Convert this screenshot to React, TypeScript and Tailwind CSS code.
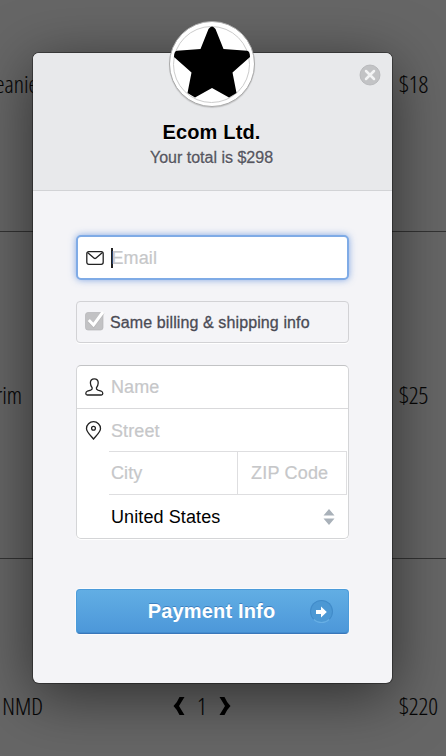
import type { ReactNode } from "react";

function CartRow({ name, price, className, children }: { name: string; price: string; className: string; children?: ReactNode }) {
  return (
    <div className={`flex justify-between border-[#333] ${className}`}>
      <div className="flex w-[43px] justify-end whitespace-nowrap">
        <span>{name}</span>
      </div>
      {children}
      <div className="w-[47px] whitespace-nowrap">
        <span>{price}</span>
      </div>
    </div>
  );
}

function Cart() {
  return (
    <div className="flex h-[756px] flex-col overflow-hidden bg-[#666] font-['Open_Sans',sans-serif] text-[24px] leading-[30px] font-light text-[#050505] [-webkit-text-stroke:0.1px_#050505] [font-stretch:75%]">
      <CartRow name="eanie" price="$18" className="h-[232px] items-center border-b pb-[64px] [&>div:first-child]:w-[38px]" />
      <CartRow name="rim" price="$25" className="h-[327px] items-center border-b pb-[1px] [&>div:first-child]:w-[22px]" />
      <CartRow name="NMD" price="$220" className="h-[197px] items-start pt-[132px]">
        <div className="mr-[38px] flex items-center gap-[12px]">
          <svg width="12" height="18" viewBox="0 0 12 18"><path d="M6.500 0h5Q9 4 6 9q3 5 5.500 9h-5Q4.500 13 .5 9 4.500 5 6.500 0Z" /></svg>
          <span>1</span>
          <svg width="12" height="18" viewBox="0 0 12 18"><path d="M5.500 0h-5Q3 4 6 9 3 14 .5 18h5Q7.500 13 11.500 9 7.500 5 5.500 0Z" /></svg>
        </div>
      </CartRow>
    </div>
  );
}

function Header() {
  return (
    <header className="flex h-[138px] flex-col items-center rounded-t-[6px] border-b border-[#d2d3d6] bg-[#e8e9eb]">
      <div className="-mt-[32px] mr-[2px] flex size-[86px] shrink-0 items-center justify-center rounded-full border border-[#aaa] bg-white shadow-[0_1px_1px_rgba(0,0,0,0.15)]">
        <div className="flex size-[77px] items-center justify-center rounded-full border border-[#ccc]">
          <svg width="76" height="73" viewBox="0 0 76 73" className="mb-[3px] shrink-0">
            <path d="M34.500 3Q38-2 41.500 3L49.500 23 73 24.700Q76 25 76 31L58.500 46.500 62.500 67 55 71.500 38 62 21 71.500 13.500 67 17.500 46.500 0 31Q0 25 3 24.700L26.500 23Z" />
          </svg>
        </div>
      </div>
      <h1 className="mt-[13px] mr-[2px] text-[20px] leading-[25px] font-bold tracking-[0.16px] text-black [text-shadow:0_1px_0_#fff]">Ecom Ltd.</h1>
      <p className="mt-[2px] mr-[2px] text-[16px] leading-[22px] text-[#55565f] [-webkit-text-stroke:0.3px_#55565f] [text-shadow:0_1px_0_#fff]">Your total is $298</p>
      <button aria-label="Close" className="absolute top-[11px] right-[11px]">
        <svg width="22" height="22" viewBox="0 0 22 22">
          <circle cx="11" cy="11" r="10" fill="#c2c3c5" stroke="#b3b4b6" strokeWidth=".8" />
          <path d="m7 7 8 8m0-8-8 8" stroke="#f2f3f4" strokeWidth="2.500" strokeLinecap="round" />
        </svg>
      </button>
    </header>
  );
}

const placeholder = "text-[18px] leading-[22px] text-[#c6c7c9] tracking-[0.1px] [-webkit-text-stroke:0.2px_#c6c7c9]";

function Checkout() {
  return (
    <section className="absolute top-[53px] left-[33px] h-[630px] w-[359px] rounded-[6px] bg-[#f4f4f7] font-['Liberation_Sans',Arial,sans-serif] shadow-[0_0_0_1px_rgba(0,0,0,0.35),0_12px_60px_rgba(0,0,0,0.55)]">
      <Header />
      <div className="flex flex-col px-[43px] pt-[44px]">
        <div className="flex h-[45px] items-center rounded-[5px] border-2 border-[#7fabe6] bg-white pl-[8px] shadow-[0_0_7px_rgba(85,135,220,0.7)]">
          <svg width="18" height="14" viewBox="0 0 18 14" fill="none" stroke="#222" strokeWidth="1.300" strokeLinejoin="round">
            <rect x=".8" y=".7" width="16.400" height="12.600" rx="2" />
            <path d="m1.500 1.500 6.700 5.700q.8.600 1.600 0l6.700-5.700" />
          </svg>
          <i className="ml-[7px] h-[20px] w-[2px] bg-[#222]" />
          <span className={`-ml-[1.500px] ${placeholder}`}>Email</span>
        </div>

        <div className="mt-[21px] flex h-[42px] items-center rounded-[4px] border border-[#d2d2d5] pl-[8px] shadow-[0_1px_0_#fff]">
          <svg width="20" height="20" viewBox="0 0 20 20" className="mb-[2px] shrink-0 overflow-visible">
            <rect x=".5" y="1.500" width="17.500" height="17.500" rx="2.500" fill="#c2c2c4" stroke="#b5b5b7" strokeWidth=".7" />
            <path d="M3.800 9.500 8.500 14.500 18 1.500" fill="none" stroke="#aaa" strokeWidth="3.800" opacity=".45" />
            <path d="M3.800 9 8.500 14 18 1" fill="none" stroke="#fff" strokeWidth="3" />
          </svg>
          <span className="mt-px ml-[5px] text-[16px] leading-[22px] tracking-[0.11px] whitespace-nowrap text-[#4a4b55] [-webkit-text-stroke:0.3px_#4a4b55]">Same billing &amp; shipping info</span>
        </div>

        <div className="mt-[22px] flex h-[174px] flex-col rounded-[5px] border border-[#d4d5d7] border-t-[#c2c3c5] bg-white shadow-[0_1px_0_#fff]">
          <div className="flex h-[43px] items-center border-b border-[#d9d9db] pl-[8px]">
            <svg width="19" height="18" viewBox="0 0 19 18" fill="none" stroke="#222" strokeWidth="1.300">
              <path d="M9.300.8C6.700.8 5.300 2.700 5.400 5c.1 2.300.8 3.700 1.800 4.900.3 1.200-.3 1.800-1.500 2.200L2.500 13C1.200 13.500.8 14.300.8 15.500c0 1 .5 1.500 1.500 1.500h14c1 0 1.500-.5 1.500-1.500 0-1.200-.4-2-1.700-2.500l-3.200-.9c-1.200-.4-1.800-1-1.500-2.200 1-1.200 1.700-2.600 1.800-4.900.1-2.300-1.300-4.200-3.900-4.200Z" />
            </svg>
            <span className={`ml-[7px] ${placeholder}`}>Name</span>
          </div>
          <div className="flex h-[43px] items-center pl-[8px]">
            <svg width="17" height="19" viewBox="0 0 17 19" fill="none" stroke="#222" strokeWidth="1.300">
              <path d="M8.500 18C6 14.800 1.500 11 1.500 7.400a7 6.700 0 0 1 14 0C15.500 11 11 14.800 8.500 18Z" />
              <circle cx="8.500" cy="7.300" r="1.900" />
            </svg>
            <span className={`ml-[9px] ${placeholder}`}>Street</span>
          </div>
          <div className="-mt-px mr-px ml-[32px] flex h-[44px] border-y border-r border-[#dedee0]">
            <div className={`flex w-[129px] items-center border-r border-[#dedee0] pl-[2px] ${placeholder}`}>City</div>
            <div className={`flex items-center pl-[13px] tracking-[0.2px]! whitespace-nowrap ${placeholder}`}>ZIP Code</div>
          </div>
          <div className="flex h-[43px] items-center justify-between pr-[13px] pl-[34px]">
            <span className="text-[18px] leading-[22px] tracking-[0.1px] text-black">United States</span>
            <svg width="12" height="16" viewBox="0 0 12 16" fill="#a9b1b9"><path d="m6 0 5.500 6.500H.5ZM6 16l5.500-6.500H.5Z" /></svg>
          </div>
        </div>

        <button className="relative mt-[50px] flex h-[45px] items-center justify-center rounded-[4px] border border-[#4b9bda] border-b-[#3976b9] bg-linear-to-b from-[#62aee4] to-[#4c97d9] shadow-[0_0_0_1px_rgba(255,255,255,0.6),inset_0_-1px_0_#438ccf]">
          <span className="mr-[2px] mb-[2px] text-[20px] leading-[24px] font-bold tracking-[0.18px] text-white [text-shadow:0_-1px_0_rgba(30,90,160,0.5)]">Payment Info</span>
          <span className="absolute right-[15px] flex size-[23px] items-center justify-center rounded-full border border-[#418bc9] border-b-[#68afe5] bg-[#4c98d4]">
            <svg width="11" height="12" viewBox="0 0 11 12" fill="#fff"><path d="M0 4h5V.6L10.800 6 5 11.400V8H0Z" /></svg>
          </span>
        </button>
      </div>
    </section>
  );
}

export default function App() {
  return (
    <main className="relative h-[756px] w-[446px] overflow-hidden">
      <Cart />
      <Checkout />
    </main>
  );
}
